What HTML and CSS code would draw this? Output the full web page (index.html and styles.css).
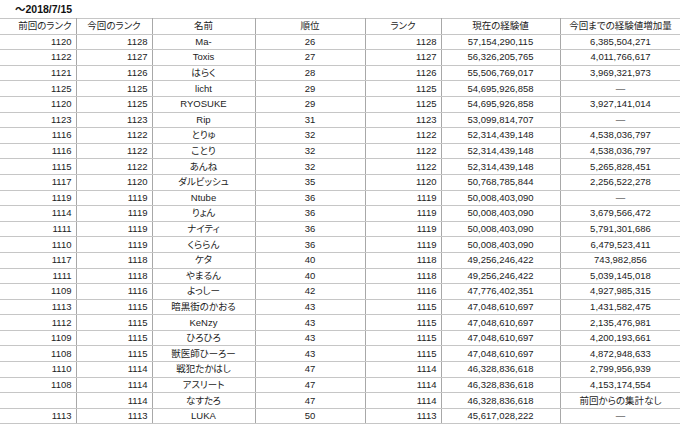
FILE: index.html
```html
<!DOCTYPE html>
<html lang="ja">
<head>
<meta charset="utf-8">
<title>ランク</title>
<link rel="stylesheet" href="styles.css">
</head>
<body>
<div class="title">〜2018/7/15</div>
<table class="sheet">
<colgroup>
<col class="w1"><col class="w2"><col class="w3"><col class="w4"><col class="w5"><col class="w6"><col class="w7">
</colgroup>
<thead>
<tr><th class="r">前回のランク</th><th>今回のランク</th><th>名前</th><th>順位</th><th>ランク</th><th>現在の経験値</th><th>今回までの経験値増加量</th></tr>
</thead>
<tbody>
<tr><td class="r">1120</td><td class="r">1128</td><td>Ma-</td><td>26</td><td class="r">1128</td><td>57,154,290,115</td><td>6,385,504,271</td></tr>
<tr><td class="r">1122</td><td class="r">1127</td><td>Toxis</td><td>27</td><td class="r">1127</td><td>56,326,205,765</td><td>4,011,766,617</td></tr>
<tr><td class="r">1121</td><td class="r">1126</td><td>はらく</td><td>28</td><td class="r">1126</td><td>55,506,769,017</td><td>3,969,321,973</td></tr>
<tr><td class="r">1125</td><td class="r">1125</td><td>licht</td><td>29</td><td class="r">1125</td><td>54,695,926,858</td><td>—</td></tr>
<tr><td class="r">1120</td><td class="r">1125</td><td>RYOSUKE</td><td>29</td><td class="r">1125</td><td>54,695,926,858</td><td>3,927,141,014</td></tr>
<tr><td class="r">1123</td><td class="r">1123</td><td>Rip</td><td>31</td><td class="r">1123</td><td>53,099,814,707</td><td>—</td></tr>
<tr><td class="r">1116</td><td class="r">1122</td><td>とりゅ</td><td>32</td><td class="r">1122</td><td>52,314,439,148</td><td>4,538,036,797</td></tr>
<tr><td class="r">1116</td><td class="r">1122</td><td>ことり</td><td>32</td><td class="r">1122</td><td>52,314,439,148</td><td>4,538,036,797</td></tr>
<tr><td class="r">1115</td><td class="r">1122</td><td>あんね</td><td>32</td><td class="r">1122</td><td>52,314,439,148</td><td>5,265,828,451</td></tr>
<tr><td class="r">1117</td><td class="r">1120</td><td>ダルビッシュ</td><td>35</td><td class="r">1120</td><td>50,768,785,844</td><td>2,256,522,278</td></tr>
<tr><td class="r">1119</td><td class="r">1119</td><td>Ntube</td><td>36</td><td class="r">1119</td><td>50,008,403,090</td><td>—</td></tr>
<tr><td class="r">1114</td><td class="r">1119</td><td>りょん</td><td>36</td><td class="r">1119</td><td>50,008,403,090</td><td>3,679,566,472</td></tr>
<tr><td class="r">1111</td><td class="r">1119</td><td>ナイティ</td><td>36</td><td class="r">1119</td><td>50,008,403,090</td><td>5,791,301,686</td></tr>
<tr><td class="r">1110</td><td class="r">1119</td><td>くららん</td><td>36</td><td class="r">1119</td><td>50,008,403,090</td><td>6,479,523,411</td></tr>
<tr><td class="r">1117</td><td class="r">1118</td><td>ケタ</td><td>40</td><td class="r">1118</td><td>49,256,246,422</td><td>743,982,856</td></tr>
<tr><td class="r">1111</td><td class="r">1118</td><td>やまるん</td><td>40</td><td class="r">1118</td><td>49,256,246,422</td><td>5,039,145,018</td></tr>
<tr><td class="r">1109</td><td class="r">1116</td><td>よっしー</td><td>42</td><td class="r">1116</td><td>47,776,402,351</td><td>4,927,985,315</td></tr>
<tr><td class="r">1113</td><td class="r">1115</td><td>暗黒街のかおる</td><td>43</td><td class="r">1115</td><td>47,048,610,697</td><td>1,431,582,475</td></tr>
<tr><td class="r">1112</td><td class="r">1115</td><td>KeNzy</td><td>43</td><td class="r">1115</td><td>47,048,610,697</td><td>2,135,476,981</td></tr>
<tr><td class="r">1109</td><td class="r">1115</td><td>ひろひろ</td><td>43</td><td class="r">1115</td><td>47,048,610,697</td><td>4,200,193,661</td></tr>
<tr><td class="r">1108</td><td class="r">1115</td><td>獣医師ひーろー</td><td>43</td><td class="r">1115</td><td>47,048,610,697</td><td>4,872,948,633</td></tr>
<tr><td class="r">1110</td><td class="r">1114</td><td>戦犯たかはし</td><td>47</td><td class="r">1114</td><td>46,328,836,618</td><td>2,799,956,939</td></tr>
<tr><td class="r">1108</td><td class="r">1114</td><td>アスリート</td><td>47</td><td class="r">1114</td><td>46,328,836,618</td><td>4,153,174,554</td></tr>
<tr><td class="r"></td><td class="r">1114</td><td>なすたろ</td><td>47</td><td class="r">1114</td><td>46,328,836,618</td><td>前回からの集計なし</td></tr>
<tr><td class="r">1113</td><td class="r">1113</td><td>LUKA</td><td>50</td><td class="r">1113</td><td>45,617,028,222</td><td>—</td></tr>
</tbody>
</table>
</body>
</html>
```

FILE: styles.css
```css
html, body {
  margin: 0;
  padding: 0;
  background: #ffffff;
  overflow: hidden;
}
body {
  font-family: "Liberation Sans", Arial, "Noto Sans CJK JP", sans-serif;
  color: #1c1c1c;
  width: 680px;
  height: 425px;
  font-feature-settings: "palt";
}
.title {
  height: 18px;
  line-height: 19px;
  padding-left: 15px;
  font-size: 10.5px;
  font-weight: bold;
  color: #111;
}
.sheet {
  border-collapse: collapse;
  table-layout: fixed;
  width: 681px;
  font-size: 9.5px;
}
.w1 { width: 76px; }
.w2 { width: 76px; }
.w3 { width: 103px; }
.w4 { width: 110px; }
.w5 { width: 76px; }
.w6 { width: 119px; }
.w7 { width: 121px; }
.sheet th,
.sheet td {
  height: 14.6px;
  padding: 0 4px;
  line-height: 14px;
  font-weight: normal;
  text-align: center;
  white-space: nowrap;
  border-top: 1px solid #c6c6c6;
  border-bottom: 1px solid #c6c6c6;
  border-left: 1px solid #a8a8a8;
  border-right: 1px solid #a8a8a8;
}
.sheet th:first-child,
.sheet td:first-child {
  border-left: none;
}
.sheet .r {
  text-align: right;
}
```
